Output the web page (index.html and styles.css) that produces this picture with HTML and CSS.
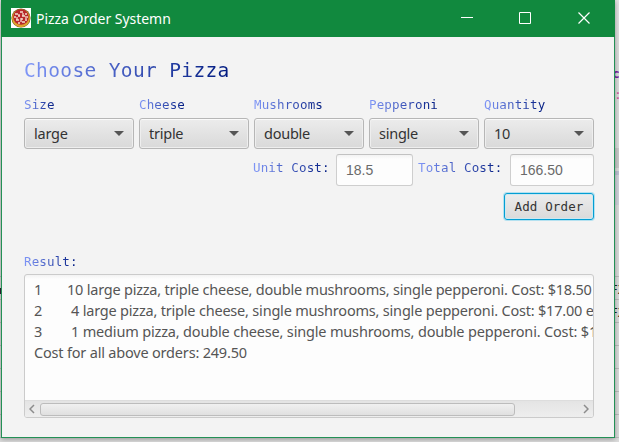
FILE: index.html
```html
<!DOCTYPE html>
<html lang="en">
<head>
<meta charset="utf-8">
<title>Pizza Order Systemn</title>
<link rel="stylesheet" href="styles.css">
</head>
<body>
<div class="backdrop">
  <span class="bit bit-purple">c</span>
  <span class="bit bit-pink">:</span>
  <span class="bit bit-fx1">FX</span>
  <span class="bit bit-fx2">FX</span>
  <span class="bit bit-left"></span>
  <span class="bit bit-band"></span>
</div>
<div class="window">
  <header class="titlebar">
    <svg class="app-icon" viewBox="0 0 20 20">
      <rect width="20" height="20" fill="#fff"/>
      <circle cx="10" cy="10" r="9.6" fill="#6f5a20"/>
      <circle cx="10" cy="10.2" r="9" fill="#dfa52c"/>
      <circle cx="10" cy="9" r="7.8" fill="#b8272b"/>
      <path d="M4 6h3M9 4h3M14 6h2M3 9h2M7 8h2M11 8h3M16 9h1M5 12h3M10 11h2M14 12h2M7 15h2M11 14h3M8 6v2M12 5v3M6 9v3M10 10v4M15 8v3" stroke="#f3dccb" stroke-width="1.3" fill="none"/>
    </svg>
    <span class="title">Pizza Order Systemn</span>
    <svg class="controls" viewBox="0 0 154 36" fill="none" stroke="#fff">
      <path d="M0 17.5h12"/>
      <path d="M58.500 12.500h11v11h-11z"/>
      <path d="M117.500 12.500l11 11M128.500 12.500l-11 11" stroke-width="1.2"/>
    </svg>
  </header>
  <main class="content">
    <h1 class="heading"><span class="ink">Choose Your Pizza</span></h1>
    <div class="fields">
      <div class="field"><label class="mono ink">Size</label><div class="combo"><span>large</span><i class="arrow"></i></div></div>
      <div class="field"><label class="mono ink">Cheese</label><div class="combo"><span>triple</span><i class="arrow"></i></div></div>
      <div class="field"><label class="mono ink">Mushrooms</label><div class="combo"><span>double</span><i class="arrow"></i></div></div>
      <div class="field"><label class="mono ink">Pepperoni</label><div class="combo"><span>single</span><i class="arrow"></i></div></div>
      <div class="field"><label class="mono ink">Quantity</label><div class="combo"><span>10</span><i class="arrow"></i></div></div>
    </div>
    <div class="costs">
      <span class="mono ink unit">Unit Cost:</span><div class="box box-unit">18.5</div>
      <span class="mono ink total">Total Cost:</span><div class="box box-total">166.50</div>
    </div>
    <div class="actions"><button class="add mono">Add Order</button></div>
    <div class="result-label"><span class="mono ink">Result:</span></div>
    <div class="result">
      <div class="lines">
        <div class="line"><span class="num">1</span><span class="l1">10 large pizza, triple cheese, double mushrooms, single pepperoni. Cost: $18.50</span></div>
        <div class="line"><span class="num">2</span><span class="l2">4 large pizza, triple cheese, single mushrooms, single pepperoni. Cost: $17.00 e</span></div>
        <div class="line"><span class="num">3</span><span class="l3">1 medium pizza, double cheese, single mushrooms, double pepperoni. Cost: $1</span></div>
        <div class="line"><span class="l4">Cost for all above orders: 249.50</span></div>
      </div>
      <div class="scroll">
        <svg class="chev" viewBox="0 0 6 10"><path d="M5 1L1 5l4 4"/></svg>
        <div class="thumb"></div>
        <svg class="chev" viewBox="0 0 6 10"><path d="M1 1l4 4-4 4"/></svg>
      </div>
    </div>
  </main>
</div>
</body>
</html>
```
FILE: styles.css
```css
* { box-sizing: border-box; }
body { margin: 0; width: 619px; height: 442px; overflow: hidden; position: relative; background: #dcdcdc; font-family: "Noto Sans", sans-serif; }
.backdrop { position: absolute; inset: 0; background: linear-gradient(#e4e4e4, #dcdcdc 60px, #dcdcdc 275px, transparent 275px), repeating-linear-gradient(#dcdcdc 0 22px, #bdbdbd 22px 23px); background-position: 0 0, 0 1px; }
.bit { position: absolute; left: 612px; font: 13px/16px "DejaVu Sans Mono", monospace; white-space: nowrap; }
.bit-purple { top: 66px; color: #7b1fa2; font-weight: bold; }
.bit-pink { top: 87px; left: 614px; color: #d457a0; }
.bit-fx1, .bit-fx2 { left: 610px; height: 15px; line-height: 15px; color: #222; }
.bit-fx1 { top: 282px; }
.bit-fx2 { top: 305px; }
.bit-left { left: 0; top: 288px; width: 2px; height: 6px; background: #312035; }
.bit-band { left: 614px; top: 148px; width: 5px; height: 57px; background: linear-gradient(#cacaca 0 20px, #dcdcdc 20px 23px, #bfc1d3 23px 27px, #d2d3dc 27px); }
.window { position: relative; margin-left: 1px; width: 614px; height: 438px; border: 1px solid #239055; border-top: 0; background: #f3f3f3; box-shadow: 0 1px 5px rgba(0,0,0,.35); }
.titlebar { height: 37px; margin: 0 -1px; padding-left: 10px; display: flex; align-items: center; background: #11893e; }
.app-icon { width: 20px; height: 20px; margin-top: -1px; }
.title { margin-left: 5px; color: #fff; font-size: 14px; letter-spacing: -.03px; }
.controls { width: 154px; height: 36px; margin: 0 0 1px auto; }
.content { padding: 22px 20px 0 22px; }
.ink { color: transparent; background: linear-gradient(90deg, #7f96f8, #001a80); -webkit-background-clip: text; background-clip: text; }
.mono { font-family: "DejaVu Sans Mono", monospace; font-size: 12.500px; letter-spacing: .14px; }
.heading { margin: 0; height: 36px; font: 19.500px/23px "DejaVu Sans Mono", monospace; letter-spacing: .36px; }
.heading .ink { display: inline-block; }
.fields { display: grid; grid-template-columns: repeat(5, 110px); gap: 5px; }
.field { display: flex; flex-direction: column; align-items: flex-start; }
.field label { height: 23px; line-height: 20px; }
.combo { width: 110px; height: 31px; padding: 0 9px 1px; display: flex; align-items: center; justify-content: space-between; border: 1px solid #b6b6b6; border-radius: 3px; background: linear-gradient(#ececec, #d9d9d9); box-shadow: inset 0 1px #fafafa, inset 0 0 0 1px #eee; color: #333; font-size: 14.500px; letter-spacing: -.25px; }
.arrow { border: 5px solid transparent; border-top-color: #555; border-bottom: 0; }
.costs { margin-top: 5px; height: 32px; padding-left: 229px; display: flex; align-items: flex-start; }
.costs .mono { line-height: 27px; }
.unit { width: 77px; }
.total { width: 85px; }
.box { height: 32px; padding-left: 9px; border: 1px solid #cecece; border-top-color: #c2c2c2; border-radius: 3px; background: linear-gradient(#f3f3f3, #fdfdfd 4px); color: #6a6a6a; font: 14px/31px "Liberation Sans", sans-serif; }
.box-unit { width: 77px; margin: 0 5px 0 6px; }
.box-total { width: 84px; margin-left: 7px; }
.actions { height: 41px; margin-top: 7px; display: flex; justify-content: flex-end; align-items: flex-start; }
.add { width: 90px; height: 27px; padding: 0; border: 1px solid #039ed3; border-radius: 3px; background: linear-gradient(#ececec, #dadada); box-shadow: 0 0 0 1px #b4e1f0, inset 0 0 0 1px #cce8f1; color: #333; }
.result-label { margin-top: 16px; height: 24px; line-height: 20px; }
.result-label .ink { display: inline-block; }
.result { width: 570px; height: 144px; border: 1px solid #cbcbcb; border-radius: 3px; background: linear-gradient(#f3f3f3, #fdfdfd 4px); overflow: hidden; }
.lines { height: 125px; padding: 4px 0 0 9px; overflow: hidden; color: #555; font-size: 14.500px; }
.line { display: flex; height: 21px; line-height: 21px; white-space: pre; }
.num { width: 33px; flex: none; }
.l1 { letter-spacing: -.22px; }
.l2, .l3 { padding-left: 4px; letter-spacing: -.2px; }
.l3 { letter-spacing: -.17px; }
.l4 { letter-spacing: -.19px; }
.scroll { height: 17px; padding: 0 4px; display: flex; align-items: center; border-top: 1px solid #ddd; background: linear-gradient(#e4e4e4, #eee); }
.chev { width: 6px; height: 10px; fill: none; stroke: #8c8c8c; stroke-width: 1.5; }
.thumb { width: 475px; height: 13px; margin: 0 auto 0 5px; border: 1px solid #bcbcbc; border-radius: 3px; background: linear-gradient(#f0f0f0, #e0e0e0); }
```
